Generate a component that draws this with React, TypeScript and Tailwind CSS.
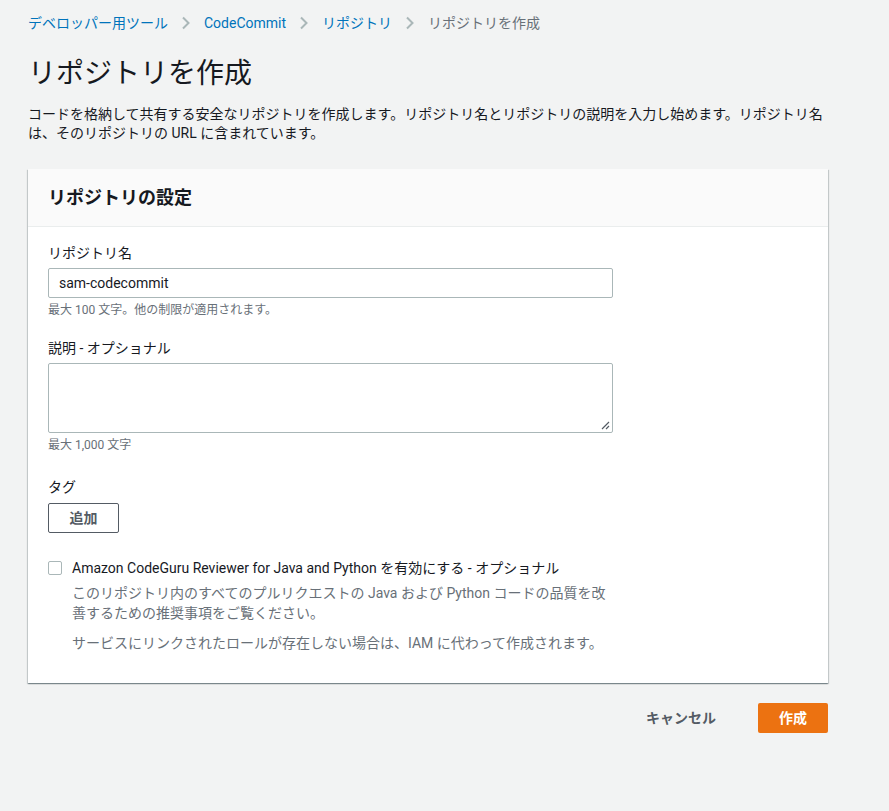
import React from "react";

const F = { fontFamily: 'Roboto, "Noto Sans CJK JP", sans-serif' };

function Chevron() {
  return (
    <svg width="10" height="14" viewBox="0 0 10 14" className="mx-[13px]">
      <path d="M2 1.5 L7.5 7 L2 12.5" fill="none" stroke="#aab7b8" strokeWidth="2" />
    </svg>
  );
}

export default function App() {
  return (
    <div className="min-h-[811px] w-full bg-[#f2f3f3] text-[#16191f] pl-[28px] pt-[13px]" style={F}>
      <nav className="flex items-center h-[20px] text-[14px] leading-[20px]">
        <span className="text-[#0073bb]">デベロッパー用ツール</span>
        <Chevron />
        <span className="text-[#0073bb]">CodeCommit</span>
        <Chevron />
        <span className="text-[#0073bb]">リポジトリ</span>
        <Chevron />
        <span className="text-[#687078]">リポジトリを作成</span>
      </nav>
      <h1 className="mt-[23px] text-[28px] leading-[36px] font-normal">リポジトリを作成</h1>
      <p className="mt-[13px] w-[810px] text-[14px] leading-[19px] text-[#16191f]">
        コードを格納して共有する安全なリポジトリを作成します。リポジトリ名とリポジトリの説明を入力し始めます。リポジトリ名は、そのリポジトリの URL に含まれています。
      </p>
      <div className="mt-[26px] w-[800px] bg-white shadow-[0_1px_1px_0_rgba(0,28,36,0.3),1px_1px_1px_0_rgba(0,28,36,0.15),-1px_1px_1px_0_rgba(0,28,36,0.15)]">
        <div className="h-[58px] flex items-center px-[20px] bg-[#fafafa] border-b border-[#eaeded]">
          <h2 className="text-[18px] leading-[22px] font-bold">リポジトリの設定</h2>
        </div>
        <div className="px-[20px] pt-[16px] pb-[30px]">
          <div className="text-[14px] leading-[20px]">リポジトリ名</div>
          <div className="mt-[5px] w-[565px] h-[30px] border border-[#aab7b8] rounded-[2px] flex items-center px-[10px] text-[14px]">
            sam-codecommit
          </div>
          <div className="mt-[4px] text-[12px] leading-[16px] text-[#687078]">最大 100 文字。他の制限が適用されます。</div>

          <div className="mt-[20px] text-[14px] leading-[20px]">説明 - オプショナル</div>
          <div className="relative mt-[5px] w-[565px] h-[70px] border border-[#aab7b8] rounded-[2px]">
            <svg className="absolute right-[2px] bottom-[2px]" width="10" height="10" viewBox="0 0 10 10">
              <path d="M9 2 L2 9 M9 6 L6 9" stroke="#545b64" strokeWidth="1.2" />
            </svg>
          </div>
          <div className="mt-[4px] text-[12px] leading-[16px] text-[#687078]">最大 1,000 文字</div>

          <div className="mt-[24px] text-[14px] leading-[20px]">タグ</div>
          <button className="mt-[6px] w-[71px] h-[30px] border border-[#545b64] rounded-[2px] text-[14px] font-bold text-[#545b64] bg-white">
            追加
          </button>

          <div className="mt-[25px] flex items-start">
            <div className="mt-[3px] w-[14px] h-[14px] border border-[#aab7b8] rounded-[2px] bg-white shrink-0" />
            <div className="ml-[10px]">
              <div className="text-[14px] leading-[20px]">Amazon CodeGuru Reviewer for Java and Python を有効にする - オプショナル</div>
              <p className="mt-[5px] w-[545px] text-[14px] leading-[20px] text-[#687078]">
                このリポジトリ内のすべてのプルリクエストの Java および Python コードの品質を改善するための推奨事項をご覧ください。
              </p>
              <p className="mt-[10px] text-[14px] leading-[20px] text-[#687078]">
                サービスにリンクされたロールが存在しない場合は、IAM に代わって作成されます。
              </p>
            </div>
          </div>
        </div>
      </div>
      <div className="w-[800px] mt-[20px] flex justify-end items-center">
        <span className="text-[14px] font-bold text-[#545b64] mr-[42px]">キャンセル</span>
        <button className="w-[70px] h-[30px] bg-[#ec7211] rounded-[2px] text-white text-[14px] font-bold">作成</button>
      </div>
    </div>
  );
}
